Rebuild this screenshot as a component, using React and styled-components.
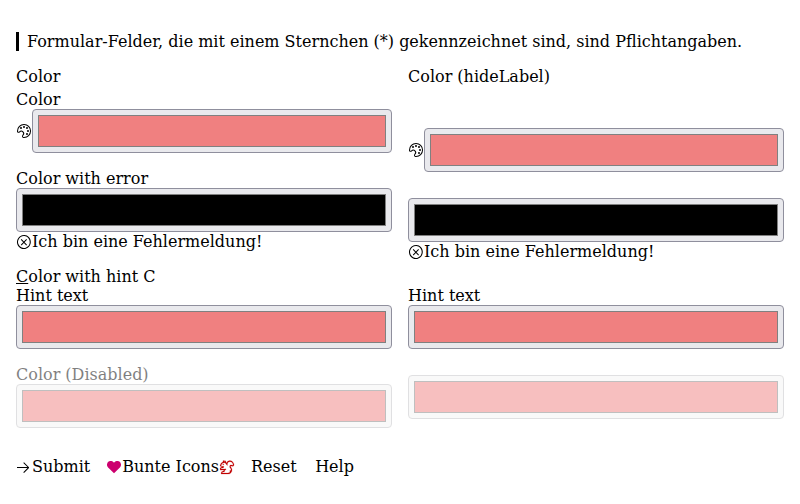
import React from "react";
import styled, { createGlobalStyle } from "styled-components";
import {
  VscSymbolColor,
  VscError,
  VscArrowRight,
  VscHeartFilled,
  VscSquirrel,
} from "react-icons/vsc";

const GlobalStyle = createGlobalStyle`
  body {
    margin: 0;
    background: #fff;
    color: #000;
    font: 16px/19px "DejaVu Serif", serif;
  }
  * { box-sizing: border-box; }
  svg { display: block; flex: none; width: 16px; height: 16px; }
`;

const Form = styled.form`
  padding: 32px 16px 0;
`;

const Notice = styled.p`
  margin: 0 0 16px;
  padding-left: 8px;
  border-left: 3px solid #000;
`;

const Columns = styled.div`
  display: grid;
  grid-template-columns: 1fr 1fr;
  column-gap: 16px;
  align-items: start;
`;

const Column = styled.section`
  display: flex;
  flex-direction: column;
`;

const Title = styled.div`
  height: 19px;
`;

const Field = styled.div`
  margin-top: ${(p) => p.$gap ?? 16}px;
  opacity: ${(p) => (p.$disabled ? 0.5 : 1)};
`;

const Line = styled.div`
  display: flex;
  align-items: center;
  height: 19px;
`;

const AccessKey = styled.span`
  text-decoration: underline;
`;

const InputRow = styled.div`
  display: flex;
  align-items: center;
`;

const ColorBox = styled.div`
  flex: 1;
  height: 44px;
  padding: 5px;
  border: 1px solid ${(p) => (p.$disabled ? "#c3c3c6" : "#8f8f9d")};
  border-radius: 4px;
  background: ${(p) => (p.$disabled ? "#f4f4f4" : "#e9e9ed")};
`;

const Swatch = styled.div`
  height: 100%;
  border: 1px solid #808080;
  background: ${(p) => p.$color};
`;

const Actions = styled.div`
  display: flex;
  margin-top: 29px;
`;

const Action = styled.div`
  display: flex;
  align-items: center;
  margin-right: ${(p) => p.$space ?? 0}px;
`;

const ArrowIcon = styled(VscArrowRight)`
  margin: 0 1px 0 -1px;
`;

const SquirrelIcon = styled(VscSquirrel)`
  margin: 0 0.5px 0 -0.5px;
  color: #c00000;
  stroke-width: 0.2;
`;

function ColorField({ label, hint, error, icon, color = "#f08080", gap, disabled }) {
  return (
    <Field $gap={gap} $disabled={disabled}>
      {label && <div>{label}</div>}
      {hint && <Line>{hint}</Line>}
      <InputRow>
        {icon}
        <ColorBox $disabled={disabled}>
          <Swatch $color={color} />
        </ColorBox>
      </InputRow>
      {error && (
        <Line>
          <VscError />
          {error}
        </Line>
      )}
    </Field>
  );
}

export default function App() {
  return (
    <Form>
      <GlobalStyle />
      <Notice>
        Formular-Felder, die mit einem Sternchen (*) gekennzeichnet sind, sind Pflichtangaben.
      </Notice>
      <Columns>
        <Column>
          <Title>Color</Title>
          <ColorField label="Color" icon={<VscSymbolColor />} gap={4} />
          <ColorField label="Color with error" color="#000" error="Ich bin eine Fehlermeldung!" />
          <ColorField label={<><AccessKey>C</AccessKey>olor with hint C</>} hint="Hint text" />
          <ColorField label="Color (Disabled)" disabled />
        </Column>
        <Column>
          <Title>Color (hideLabel)</Title>
          <ColorField icon={<VscSymbolColor />} gap={42} />
          <ColorField color="#000" error="Ich bin eine Fehlermeldung!" gap={26} />
          <ColorField hint="Hint text" gap={25} />
          <ColorField gap={26} disabled />
        </Column>
      </Columns>
      <Actions>
        <Action $space={16}><ArrowIcon />Submit</Action>
        <Action $space={16}>
          <VscHeartFilled color="#cc006e" />
          Bunte Icons
          <SquirrelIcon />
        </Action>
        <Action $space={18.5}>Reset</Action>
        <Action>Help</Action>
      </Actions>
    </Form>
  );
}
